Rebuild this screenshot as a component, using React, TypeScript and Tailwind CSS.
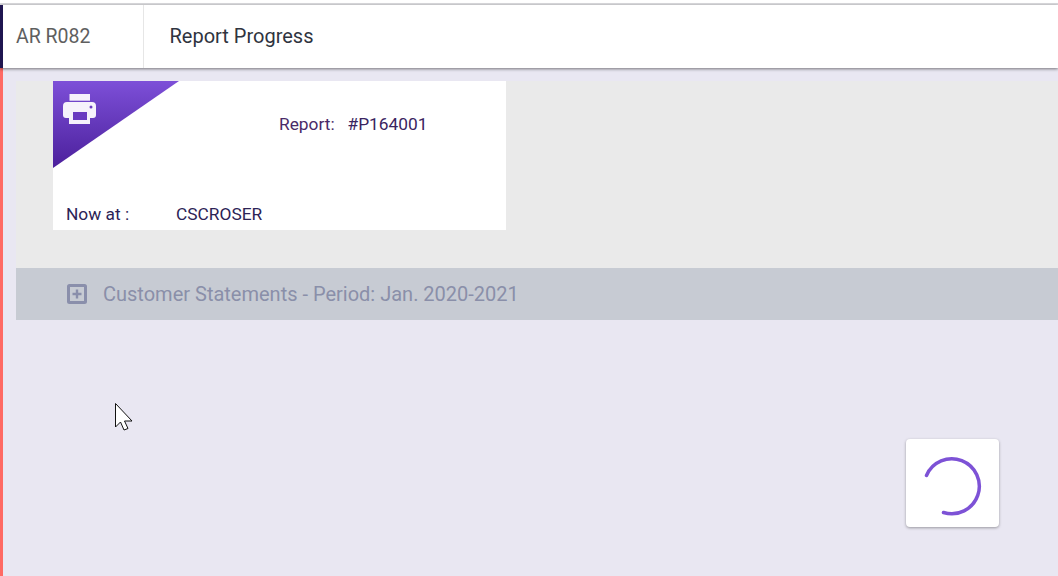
export default function App() {
  return (
    <div className="relative flex h-[576px] w-[1058px] flex-col overflow-hidden bg-[#e9e7f2] font-['Roboto',sans-serif]">
      <div className="h-[3px] flex-none bg-white" />
      <div className="h-[2px] flex-none bg-[#dadade]" />
      <header className="z-10 flex h-[63px] flex-none border-l-[3px] border-[#1f1650] bg-white shadow-[0_1px_3px_rgba(0,0,0,0.5)]">
        <div className="flex w-[141px] items-center border-r border-[#e6e6e6] pl-[13px] text-[19.5px] text-[#5f5f5f]">
          AR R082
        </div>
        <div className="flex items-center pb-[1px] pl-[25.5px] text-[20px] text-[#2f3440]">Report Progress</div>
      </header>

      <main className="flex flex-1 border-l-[3px] border-[#ff6a64]">
        <div className="flex-1 pl-[13px] pt-[13px]">
          <section className="h-[187px] bg-[#eaeaea] pl-[37px]">
            <div className="relative h-[149px] w-[453px] bg-white text-[17.33px] text-[#2c2356]">
              <div className="absolute left-0 top-0 h-[87px] w-[126px] bg-gradient-to-b from-[#7d4fd8] to-[#4c1f9c] [clip-path:polygon(0_0,100%_0,0_100%)]" />
              <svg className="absolute left-[10px] top-[13px]" width="33" height="30" viewBox="0 0 33 30" aria-hidden>
                <path fill="#f6f2fb" d="M6.500 0h20.500v6.700H6.500z" />
                <path
                  fill="#f6f2fb"
                  d="M4 8h25a4 4 0 0 1 4 4v9a3 3 0 0 1-3 3h-3v6H6v-6H3a3 3 0 0 1-3-3v-9a4 4 0 0 1 4-4z"
                />
                <path fill="#6a3bc0" d="M10 18h14v8H10z" />
                <circle cx="28" cy="13" r="1.500" fill="#6a3bc0" />
              </svg>
              <div className="flex pl-[226px] pt-[33px] leading-[20px]">
                <span className="w-[68.5px] text-[#4a2a68]">Report:</span>
                <span className="text-[#3a2460]">#P164001</span>
              </div>
              <div className="flex pl-[13px] pt-[70px] leading-[20px]">
                <span className="w-[110px]">Now at :</span>
                <span>CSCROSER</span>
              </div>
            </div>
          </section>
          <div className="flex h-[52px] items-center gap-[16px] bg-[#c7cbd3] pl-[51px] text-[20px] text-[#8a8fa9]">
            <svg width="20" height="20" viewBox="0 0 20 20" aria-hidden>
              <rect x="1.500" y="1.500" width="17" height="17" rx="1" fill="none" stroke="#8a8fab" strokeWidth="3" />
              <path d="M10 5.500v9M5.500 10h9" stroke="#8a8fab" strokeWidth="2.400" />
            </svg>
            <span>Customer Statements - Period: Jan. 2020-2021</span>
          </div>
        </div>
      </main>

      <div className="absolute left-[906px] top-[439px] flex h-[88px] w-[93px] items-center justify-center rounded-[4px] bg-white shadow-[0_1px_3px_rgba(0,0,0,0.35)]">
        <svg width="93" height="88" viewBox="0 0 93 88" aria-hidden>
          <path
            d="M20.500 36.500A27.500 27.500 0 1 1 37.500 73.500"
            fill="none"
            stroke="#7d52d6"
            strokeWidth="3.500"
            strokeLinecap="round"
          />
        </svg>
      </div>

      <svg className="absolute left-[114px] top-[403px]" width="21" height="28" viewBox="0 0 21 28" aria-hidden>
        <path
          d="M1.500 0.500V24L6.500 19L10 27L14 25.500L10.500 18H18Z"
          fill="#fff"
          stroke="#111"
          strokeWidth="1"
          strokeLinejoin="miter"
        />
      </svg>
    </div>
  );
}
